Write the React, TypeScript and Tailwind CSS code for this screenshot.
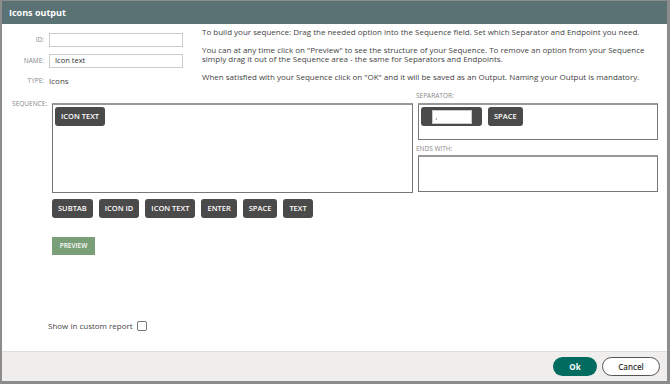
const chips = ['SUBTAB', 'ICON ID', 'ICON TEXT', 'ENTER', 'SPACE', 'TEXT']

function Chip({ label }: { label: string }) {
  return (
    <div className="h-[19px] px-[6px] flex items-center rounded-[3px] bg-[#4a4a4a] text-white text-[7.5px] font-semibold leading-none">
      {label}
    </div>
  )
}

export default function App() {
  return (
    <div className="w-[670px] h-[384px] bg-[#8c8c8c] pt-px pl-[2px] pr-[3px] pb-[3px] flex flex-col font-['Open_Sans',sans-serif]">
      <div className="h-[23px] shrink-0 bg-[#5b7275] flex items-center px-[7px] text-white text-[9px] font-bold">
        Icons output
      </div>

      <div className="flex-1 bg-white flex flex-col">
        <div className="flex h-[64px]">
          <div className="w-[192px] shrink-0 pt-[9px] flex flex-col gap-[7px]">
            <div className="flex items-center gap-[5px]">
              <span className="w-[42px] text-right text-[6.5px] text-[#888]">ID:</span>
              <div className="w-[134px] h-[14px] border border-[#ccc]" />
            </div>
            <div className="flex items-center gap-[5px]">
              <span className="w-[42px] text-right text-[6.5px] text-[#888]">NAME:</span>
              <div className="w-[134px] h-[14px] border border-[#ccc] flex items-center px-[5px] text-[7.5px] text-[#333]">
                Icon text
              </div>
            </div>
            <div className="flex items-center gap-[5px]">
              <span className="w-[42px] text-right text-[6.5px] text-[#888]">TYPE:</span>
              <span className="text-[8px] text-[#444]">Icons</span>
            </div>
          </div>
          <div className="w-[460px] pl-[8px] pt-[3px] text-[8px] leading-[9.5px] text-[#444] flex flex-col gap-[8px]">
            <p>To build your sequence: Drag the needed option into the Sequence field. Set which Separator and Endpoint you need.</p>
            <p>
              You can at any time click on "Preview" to see the structure of your Sequence. To remove an option from your Sequence simply
              drag it out of the Sequence area - the same for Separators and Endpoints.
            </p>
            <p>When satisfied with your Sequence click on "OK" and it will be saved as an Output. Naming your Output is mandatory.</p>
          </div>
        </div>

        <div className="flex mt-px">
          <div className="w-[45px] shrink-0 pt-[10px] text-right text-[6.5px] text-[#888]">SEQUENCE:</div>
          <div className="ml-[5px] w-[361px] h-[90px] mt-[14px] border border-[#777] border-t-[2px] border-t-[#999] p-[2px] flex items-start">
            <Chip label="ICON TEXT" />
          </div>
          <div className="ml-[5px] w-[240px] flex flex-col">
            <span className="h-[14px] -ml-[2px] text-[6.5px] text-[#888] leading-[14px]">SEPARATOR:</span>
            <div className="h-[37px] border border-[#777] border-t-[2px] border-t-[#999] p-[2px] flex items-start gap-[6px]">
              <div className="w-[61px] h-[19px] rounded-[3px] bg-[#4a4a4a] flex items-center justify-center">
                <div className="w-[40px] h-[14px] bg-white border border-[#ccc] pl-[3px] text-[7px] leading-[12px] text-[#333]">,</div>
              </div>
              <Chip label="SPACE" />
            </div>
            <span className="h-[15px] -ml-[2px] text-[6.5px] text-[#888] leading-[17px]">ENDS WITH:</span>
            <div className="h-[37px] border border-[#777] border-t-[2px] border-t-[#999]" />
          </div>
        </div>

        <div className="ml-[50px] mt-[6px] flex gap-[6px]">
          {chips.map(c => (
            <Chip key={c} label={c} />
          ))}
        </div>

        <div className="ml-[50px] mt-[19px]">
          <div className="w-[43px] h-[18px] bg-[#7a9e78] text-white text-[6.5px] font-semibold flex items-center justify-center">
            PREVIEW
          </div>
        </div>

        <div className="ml-[46px] mt-auto mb-[19px] flex items-center gap-[4px] text-[8px] text-[#444]">
          <span>Show in custom report</span>
          <div className="w-[10px] h-[10px] border border-[#777] rounded-[2px]" />
        </div>
      </div>

      <div className="h-[30px] shrink-0 bg-[#efeeec] border-t border-[#ddd] flex items-center justify-end gap-[5px] pr-[7px]">
        <div className="w-[44px] h-[19px] rounded-full bg-[#006b5f] text-white text-[8px] font-bold flex items-center justify-center">
          Ok
        </div>
        <div className="w-[58px] h-[19px] rounded-full bg-white border border-[#555] text-[#333] text-[8px] font-semibold flex items-center justify-center">
          Cancel
        </div>
      </div>
    </div>
  )
}
